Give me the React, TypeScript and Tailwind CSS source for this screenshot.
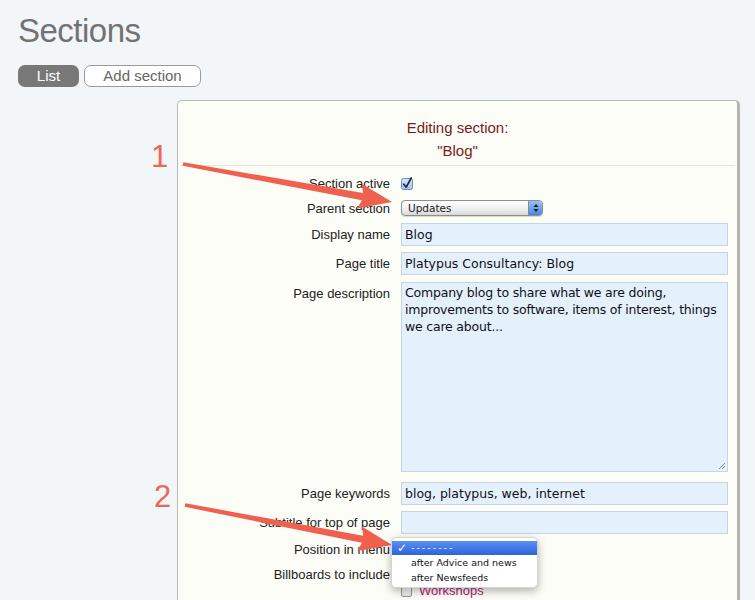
import React from 'react';

type Pt = [number, number];

// tapered annotation arrow, tail -> tip
const arrowPath = (tail: Pt, tip: Pt) => {
  const [x1, y1] = tail;
  const [x2, y2] = tip;
  const len = Math.hypot(x2 - x1, y2 - y1);
  const ux = (x2 - x1) / len;
  const uy = (y2 - y1) / len;
  const nx = -uy;
  const ny = ux;
  const headLen = 30;
  const headW = 12.5;
  const tailW = 1.8;
  const neckW = 3.6;
  const bx = x2 - ux * headLen;
  const by = y2 - uy * headLen;
  const pts: Pt[] = [
    [x1 + nx * tailW, y1 + ny * tailW],
    [bx + nx * neckW, by + ny * neckW],
    [bx - ux * 3 + nx * headW, by - uy * 3 + ny * headW],
    [x2, y2],
    [bx - ux * 3 - nx * headW, by - uy * 3 - ny * headW],
    [bx - nx * neckW, by - ny * neckW],
    [x1 - nx * tailW, y1 - ny * tailW],
  ];
  return pts.map(p => `${p[0].toFixed(1)},${p[1].toFixed(1)}`).join(' ');
};

const Label: React.FC<{ children: React.ReactNode; lh?: string }> = ({ children, lh = 'leading-[23px]' }) => (
  <div className={`w-[212px] shrink-0 text-right text-[13px] text-[#222] ${lh}`}>{children}</div>
);

const TextInput: React.FC<{ value?: string }> = ({ value = '' }) => (
  <div className="w-[327px] h-[23px] bg-[#e4f0fc] border border-[#c6d5e4] px-[3px] text-[12.5px] leading-[21px] text-[#111] font-['DejaVu_Sans',sans-serif] whitespace-nowrap overflow-hidden">
    {value}
  </div>
);

const CheckedBox = () => (
  <svg width="12" height="13" viewBox="0 0 12 13">
    <defs>
      <linearGradient id="cbg" x1="0" y1="0" x2="0" y2="1">
        <stop offset="0" stopColor="#d9e9fb" />
        <stop offset="1" stopColor="#9fc2ea" />
      </linearGradient>
    </defs>
    <rect x="0.5" y="1.5" width="11" height="11" rx="2" fill="url(#cbg)" stroke="#6c8db6" />
    <path d="M2.8 7.2 L5.2 10.2 L10.2 1" stroke="#1a2a44" strokeWidth="1.7" fill="none" strokeLinecap="round" strokeLinejoin="round" />
  </svg>
);

const EmptyBox = () => (
  <div className="w-[11px] h-[11px] rounded-[2px] border border-[#9a9a9a] bg-gradient-to-b from-white to-[#e6e6e6]" />
);

export default function App() {
  const labelRow = 'flex items-start gap-[11px]';
  return (
    <div className="relative w-[755px] h-[600px] overflow-hidden bg-[#f3f6f8] font-['Liberation_Sans',Arial,sans-serif]">
      <div className="pl-[18px] pt-[11px]">
        <h1 className="text-[33px] leading-[40px] tracking-[-0.5px] text-[#727272]">Sections</h1>
        <div className="mt-[14px] flex gap-[5px]">
          <button className="w-[61px] h-[22px] rounded-[7px] bg-[#787878] text-white text-[15px] leading-[22px]">List</button>
          <button className="w-[117px] h-[22px] rounded-[7px] bg-white border border-[#9a9a9a] text-[#666] text-[15px] leading-[20px]">Add section</button>
        </div>
      </div>

      <div className="ml-[177px] mt-[13px] w-[563px] h-[520px] bg-[#fdfdf7] border-l border-t border-[#b9b9b9] border-r-[3px] border-r-[#b5b5b5] rounded-t-[5px]">
        <div className="pt-[15px] text-center text-[15px] leading-[23px] text-[#7a1c1c]">
          <div>Editing section:</div>
          <div>"Blog"</div>
        </div>
        <div className="mt-[3px] mx-[2px] h-px bg-[#e6e6df]" />

        <div className="flex flex-col">
          <div className={`${labelRow} mt-[10px] h-[16px]`}>
            <Label lh="leading-[16px]">Section active</Label>
            <div className="pt-[1px]"><CheckedBox /></div>
          </div>

          <div className={`${labelRow} mt-[8px] h-[16px]`}>
            <Label lh="leading-[18px]">Parent section</Label>
            <div className="relative w-[142px] h-[16px] rounded-[4px] border border-[#8e8e8e] bg-gradient-to-b from-white via-[#f2f2f2] to-[#d9d9d9] shadow-[0_1px_1px_rgba(0,0,0,0.15)]">
              <span className="absolute left-[6px] top-0 text-[10.5px] leading-[14px] text-[#1a1a1a] font-['DejaVu_Sans',sans-serif]">Updates</span>
              <div className="absolute right-0 top-0 w-[14px] h-[14px] rounded-r-[3px] bg-gradient-to-b from-[#9cc1f2] to-[#4a86dc] border-l border-[#6f8fbd] flex items-center justify-center">
                <svg width="6" height="10" viewBox="0 0 6 10">
                  <path d="M3 1 L5.5 4 L0.5 4 Z" fill="#1b1b1b" />
                  <path d="M3 9 L5.5 6 L0.5 6 Z" fill="#1b1b1b" />
                </svg>
              </div>
            </div>
          </div>

          <div className={`${labelRow} mt-[7px]`}>
            <Label>Display name</Label>
            <TextInput value="Blog" />
          </div>

          <div className={`${labelRow} mt-[6px]`}>
            <Label>Page title</Label>
            <TextInput value="Platypus Consultancy: Blog" />
          </div>

          <div className={`${labelRow} mt-[7px]`}>
            <Label>Page description</Label>
            <div className="relative w-[327px] h-[190px] bg-[#e4f0fc] border border-[#c6d5e4] pl-[3px] pr-0 pt-[1px] text-[12.5px] tracking-[-0.2px] leading-[17px] text-[#111] font-['DejaVu_Sans',sans-serif]">
              Company blog to share what we are doing, improvements to software, items of interest, things we care about...
              <svg className="absolute right-[1px] bottom-[1px]" width="9" height="9" viewBox="0 0 9 9">
                <path d="M8 2 L2 8 M8 5 L5 8" stroke="#8a8a8a" strokeWidth="1" />
              </svg>
            </div>
          </div>

          <div className={`${labelRow} mt-[10px]`}>
            <Label>Page keywords</Label>
            <TextInput value="blog, platypus, web, internet" />
          </div>

          <div className={`${labelRow} mt-[6px]`}>
            <Label>Subtitle for top of page</Label>
            <TextInput />
          </div>

          <div className={`${labelRow} mt-[7px] h-[18px]`}>
            <Label lh="leading-[18px]">Position in menu</Label>
            <div className="relative w-[142px] h-[16px]">
              <div className="absolute -left-[10px] -top-[4px] z-10 w-[147px] h-[51px] bg-white rounded-[5px] border border-[#d4d4d4] shadow-[0_3px_8px_rgba(0,0,0,0.3)] pt-[3px] font-['DejaVu_Sans',sans-serif] text-[9.5px] text-[#111]">
                <div className="h-[14px] bg-gradient-to-b from-[#5b8ff2] to-[#2c63dc] text-white flex items-center">
                  <span className="w-[19px] pl-[5px] text-[12px] leading-[14px] font-bold">✓</span>
                  <span className="tracking-[2px] leading-[14px]">--------</span>
                </div>
                <div className="h-[15px] pl-[19px] leading-[15px]">after Advice and news</div>
                <div className="h-[15px] pl-[19px] leading-[15px]">after Newsfeeds</div>
              </div>
            </div>
          </div>

          <div className={`${labelRow} mt-[7px]`}>
            <Label lh="leading-[18px]">Billboards to include</Label>
            <div className="flex flex-col">
              <div className="h-[18px] flex items-center gap-[7px]">
                <EmptyBox />
              </div>
              <div className="h-[14px] flex items-center gap-[7px]">
                <EmptyBox />
                <span className="text-[13px] leading-[14px] text-[#b3287a]">Workshops</span>
              </div>
            </div>
          </div>
        </div>
      </div>

      {/* annotations */}
      <svg className="absolute inset-0 pointer-events-none" width="755" height="600" viewBox="0 0 755 600">
        <polygon points={arrowPath([183, 164], [392, 202])} fill="#f0604f" />
        <polygon points={arrowPath([185, 505], [392, 545])} fill="#f0604f" />
      </svg>
      <div className="absolute left-[151px] top-[141px] text-[31px] leading-[31px] text-[#f06655]">1</div>
      <div className="absolute left-[154px] top-[481px] text-[31px] leading-[31px] text-[#f06655]">2</div>
    </div>
  );
}
